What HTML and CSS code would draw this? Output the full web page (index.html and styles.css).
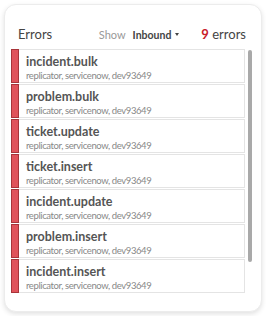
FILE: index.html
```html
<!DOCTYPE html>
<html lang="en">
<head>
  <meta charset="UTF-8">
  <title>Errors</title>
  <link rel="stylesheet" href="styles.css">
</head>
<body>

  <div class="card">
    <div class="card-header">
      <span class="title">Errors</span>
      <span class="show">Show</span>
      <span class="filter">Inbound<span class="caret"></span></span>
      <span class="count"><b>9</b> errors</span>
    </div>

    <div class="list-wrap">
      <ul class="error-list">
        <li class="error-item">
          <div class="bar"></div>
          <div class="info">
            <div class="name">incident.bulk</div>
            <div class="meta">replicator, servicenow, dev93649</div>
          </div>
        </li>
        <li class="error-item">
          <div class="bar"></div>
          <div class="info">
            <div class="name">problem.bulk</div>
            <div class="meta">replicator, servicenow, dev93649</div>
          </div>
        </li>
        <li class="error-item">
          <div class="bar"></div>
          <div class="info">
            <div class="name">ticket.update</div>
            <div class="meta">replicator, servicenow, dev93649</div>
          </div>
        </li>
        <li class="error-item">
          <div class="bar"></div>
          <div class="info">
            <div class="name">ticket.insert</div>
            <div class="meta">replicator, servicenow, dev93649</div>
          </div>
        </li>
        <li class="error-item">
          <div class="bar"></div>
          <div class="info">
            <div class="name">incident.update</div>
            <div class="meta">replicator, servicenow, dev93649</div>
          </div>
        </li>
        <li class="error-item">
          <div class="bar"></div>
          <div class="info">
            <div class="name">problem.insert</div>
            <div class="meta">replicator, servicenow, dev93649</div>
          </div>
        </li>
        <li class="error-item">
          <div class="bar"></div>
          <div class="info">
            <div class="name">incident.insert</div>
            <div class="meta">replicator, servicenow, dev93649</div>
          </div>
        </li>
      </ul>
      <div class="scrollbar"><div class="thumb"></div></div>
    </div>
  </div>

</body>
</html>
```

FILE: styles.css
```css
body {
  margin: 0;
  padding: 4px;
  background: #fff;
  font-family: Lato, "Open Sans", Arial, sans-serif;
}
.card {
  width: 258px;
  height: 308px;
  box-sizing: border-box;
  border: 1px solid #ececec;
  border-radius: 12px;
  box-shadow: 0 2px 5px rgba(0,0,0,0.12);
  background: #fff;
  padding: 0 0 0 6px;
}
.card-header {
  display: flex;
  align-items: baseline;
  height: 43px;
  box-sizing: border-box;
  padding: 21px 15px 0 7px;
}
.title {
  font-size: 13px;
  color: #444;
  flex: 1;
}
.show {
  font-size: 11px;
  color: #999;
  margin-right: 7px;
}
.filter {
  font-size: 10.5px;
  font-weight: bold;
  color: #444;
  margin-right: 22px;
}
.caret {
  display: inline-block;
  border-left: 2.5px solid transparent;
  border-right: 2.5px solid transparent;
  border-top: 3px solid #444;
  vertical-align: 3px;
  margin-left: 4px;
}
.count {
  font-size: 13px;
  color: #444;
}
.count b {
  color: #c8202a;
  font-weight: bold;
}
.list-wrap {
  display: flex;
  margin-top: 1px;
}
.error-list {
  list-style: none;
  margin: 0;
  padding: 0;
  width: 234px;
}
.error-item {
  display: flex;
  height: 34px;
  box-sizing: border-box;
  border: 1px solid #e4e4e4;
  margin-bottom: 1px;
  background: #fff;
}
.bar {
  width: 6px;
  margin: -1px 0 -1px -1px;
  background: #e0535b;
  border: 1px solid #a8343a;
}
.info {
  padding: 5px 0 0 7px;
}
.name {
  font-size: 12.5px;
  font-weight: bold;
  color: #555;
  line-height: 14px;
}
.meta {
  font-size: 9.5px;
  letter-spacing: -0.4px;
  color: #888;
  line-height: 13px;
}
.scrollbar {
  width: 4px;
  margin-left: 3px;
  padding-top: 1px;
}
.thumb {
  height: 212px;
  background: #a9a9a9;
  border-radius: 2px;
}
```
